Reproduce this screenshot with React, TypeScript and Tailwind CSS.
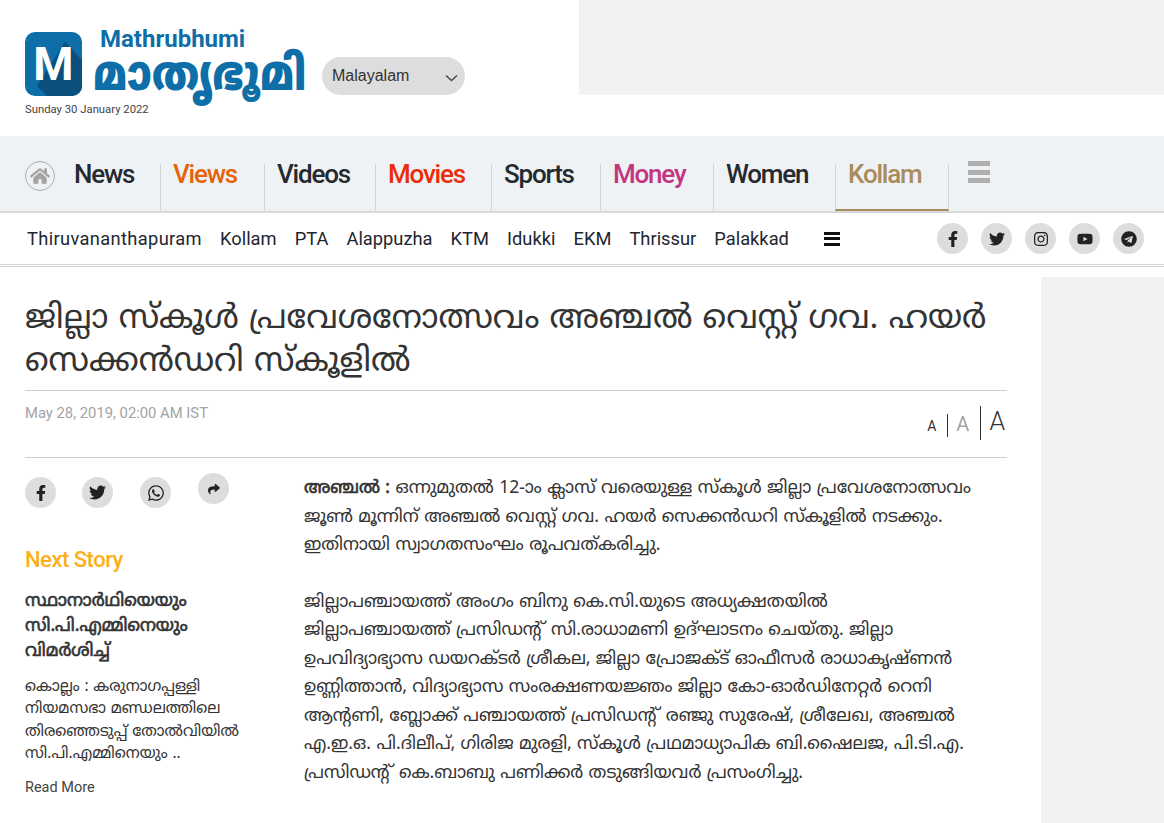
import React from "react";
import { FaFacebookF, FaTwitter, FaInstagram, FaYoutube, FaTelegram, FaWhatsapp, FaShare, FaHome } from "react-icons/fa";

const latin = { fontFamily: '"Roboto", "Noto Sans", "Noto Sans Malayalam", sans-serif' };
const mal = { fontFamily: '"Noto Sans Malayalam", "Noto Sans", "Open Sans", sans-serif' };

const nav = [
  ["News", "text-[#252a30]", "w-[160px]", "pl-[74px]", false],
  ["Views", "text-[#e5630b]", "w-[104px]", "pl-[12px]", true],
  ["Videos", "text-[#252a30]", "w-[111px]", "pl-[12px]", true],
  ["Movies", "text-[#ea2e0c]", "w-[116px]", "pl-[12px]", true],
  ["Sports", "text-[#252a30]", "w-[109px]", "pl-[12px]", true],
  ["Money", "text-[#c4357f]", "w-[113px]", "pl-[12px]", true],
  ["Women", "text-[#252a30]", "w-[122px]", "pl-[12px]", true],
];
const sub = ["Kollam", "PTA", "Alappuzha", "KTM", "Idukki", "EKM", "Thrissur", "Palakkad"];
const socials = [FaFacebookF, FaTwitter, FaInstagram, FaYoutube, FaTelegram];

function Circle({ children, className = "" }: { children: React.ReactNode; className?: string }) {
  return (
    <span className={`flex h-[31px] w-[31px] shrink-0 items-center justify-center rounded-full bg-[#dddddd] text-[#222] ${className}`}>
      {children}
    </span>
  );
}

export default function App() {
  return (
    <div className="h-[823px] w-[1164px] overflow-hidden bg-white text-[#333]" style={latin}>
      <header className="flex h-[136px]">
        <div className="w-[579px] shrink-0 pl-[25px] pt-[27px]">
          <div className="flex h-[68px]">
            <div className="relative mt-[5px] flex h-[64px] w-[57px] shrink-0 items-center justify-center overflow-hidden rounded-[10px] bg-[#0d6ea8]">
              <svg className="absolute inset-0" viewBox="0 0 57 64" width="57" height="64">
                <path d="M40 10 L57 28 V64 H22 L12 54 Z" fill="#0b4f7d" />
              </svg>
              <span className="relative text-[46px] font-bold leading-none text-white">M</span>
            </div>
            <div className="ml-[11px] w-[222px]">
              <div className="ml-[7px] mt-[2px] h-[20px] text-[24px] font-bold leading-[20px] text-[#0d6ea8]">Mathrubhumi</div>
              <div className="mt-[2px] origin-top scale-y-[1.22] whitespace-nowrap text-[40px] font-black leading-[44px] text-[#0d6ea8]" style={mal}>മാതൃഭൂമി</div>
            </div>
            <div className="relative ml-[7px] mt-[30px] flex h-[38px] w-[143px] shrink-0 items-center rounded-full bg-[#dddddd] pl-[10px] text-[16px] text-[#333]" style={{ fontFamily: '"Liberation Sans", sans-serif' }}>
              Malayalam
              <svg className="absolute right-[7px] top-[17px]" width="13" height="8" viewBox="0 0 13 8" fill="none" stroke="#444" strokeWidth="1.4"><path d="M1 1.5 L6.5 6.5 L12 1.5" /></svg>
            </div>
          </div>
          <div className="mt-[8px] text-[11.3px] leading-[14px] text-[#444]">Sunday 30 January 2022</div>
        </div>
        <div className="h-[95px] flex-1 bg-[#f2f2f2]" />
      </header>

      <nav className="relative flex h-[77px] border-b-2 border-[#d9d9d9] bg-[#eff2f5]">
        <span className="absolute left-[25px] top-[25px] flex h-[30px] w-[30px] items-center justify-center rounded-full border border-[#aaa]">
          <FaHome className="text-[20px] text-[#a3a3a3]" />
        </span>
        {nav.map(([label, color, w, pl, sep]) => (
          <div key={label as string} className={`${w} ${pl} mt-[28px] h-[47px] shrink-0 ${sep ? "border-l border-[#d3d3d3]" : ""}`}>
            <span className={`${color} -mt-px block whitespace-nowrap text-[26px] font-medium leading-[22px] tracking-[-1.2px]`}>{label}</span>
          </div>
        ))}
        <div className="mt-[28px] h-[47px] w-[114px] shrink-0 border-x border-b-2 border-[#d3d3d3] border-b-[#a98c5d] pl-[12px]">
          <span className="-mt-px block text-[26px] font-medium leading-[22px] tracking-[-1.2px] text-[#a98c5d]">Kollam</span>
        </div>
        <div className="ml-[19px] mt-[25px] flex h-[22px] w-[22px] flex-col justify-between">
          <span className="h-[5px] bg-[#b0b0b0]" />
          <span className="h-[5px] bg-[#b0b0b0]" />
          <span className="h-[5px] bg-[#b0b0b0]" />
        </div>
      </nav>

      <div className="flex h-[54px] items-center border-b-[3px] border-double border-[#d6d6d6] pl-[27px]">
        <div className="mt-[1px] flex w-[762px] justify-between text-[18.3px] text-[#1d2630]">
          <span className="whitespace-nowrap tracking-[0.35px]">Thiruvananthapuram</span>
          {sub.map((s) => <span key={s} className="whitespace-nowrap">{s}</span>)}
        </div>
        <div className="ml-[35px] flex h-[14px] w-[16px] flex-col justify-between">
          <span className="h-[3px] bg-[#111]" /><span className="h-[3px] bg-[#111]" /><span className="h-[3px] bg-[#111]" />
        </div>
        <div className="ml-auto mr-[20px] flex gap-[13px]">
          {socials.map((I, i) => <Circle key={i}><I className="text-[16px]" /></Circle>)}
        </div>
      </div>

      <div className="mt-[10px] flex">
        <main className="ml-[25px] w-[982px] shrink-0">
          <h1 className="pt-[22px] text-[33px] font-normal leading-[43px] text-[#333]" style={mal}>ജില്ലാ സ്കൂൾ പ്രവേശനോത്സവം അഞ്ചൽ വെസ്റ്റ് ഗവ. ഹയർ സെക്കൻഡറി സ്കൂളിൽ</h1>
          <div className="mt-[5px] flex h-[68px] justify-between border-y border-[#cccccc]">
            <div className="pt-[12px] text-[14.8px] leading-[20px] text-[#a3a3a3]">May 28, 2019, 02:00 AM IST</div>
            <div className="flex items-start pr-[2px] text-[#333]">
              <span className="mt-[26px] text-[14px] leading-[18px]">A</span>
              <span className="ml-[11px] mt-[23px] h-[23px] w-px bg-[#333]" />
              <span className="ml-[8px] mt-[21px] text-[20px] leading-[24px] text-[#a6a6a6]">A</span>
              <span className="ml-[11px] mt-[15px] h-[34px] w-px bg-[#333]" />
              <span className="ml-[8px] mt-[15px] text-[25px] font-light leading-[32px]">A</span>
            </div>
          </div>
          <div className="flex">
            <aside className="w-[279px] shrink-0">
              <div className="flex items-start pt-[15px]">
                <Circle className="mt-[4px]"><FaFacebookF className="text-[16px]" /></Circle>
                <Circle className="ml-[26px] mt-[4px]"><FaTwitter className="text-[17px]" /></Circle>
                <Circle className="ml-[27px] mt-[4px]"><FaWhatsapp className="text-[18px]" /></Circle>
                <Circle className="ml-[27px] h-[30px] w-[30px]"><FaShare className="text-[12px]" /></Circle>
              </div>
              <div className="mt-[37px] text-[22px] font-medium leading-[30px] tracking-[-0.5px] text-[#fbb01a]">Next Story</div>
              <div className="mt-[15px] w-[200px] text-[17.5px] font-normal leading-[25px] text-[#333] [-webkit-text-stroke:0.6px_#333]" style={mal}>സ്ഥാനാർഥിയെയും സി.പി.എമ്മിനെയും വിമർശിച്ച്</div>
              <div className="mt-[12px] w-[230px] text-[15.35px] leading-[22.3px] text-[#333]" style={mal}>കൊല്ലം : കരുനാഗപ്പള്ളി നിയമസഭാ മണ്ഡലത്തിലെ തിരഞ്ഞെടുപ്പ് തോൽവിയിൽ സി.പി.എമ്മിനെയും ..</div>
              <div className="mt-[11px] text-[14.5px] leading-[22px] text-[#444]">Read More</div>
            </aside>
            <article className="w-[672px] pt-[17px] text-[17.55px] leading-[28.5px] text-[#333]" style={mal}>
              <p><span className="[-webkit-text-stroke:0.6px_#333]">അഞ്ചൽ :</span> ഒന്നുമുതൽ 12-ാം ക്ലാസ് വരെയുള്ള സ്കൂൾ ജില്ലാ പ്രവേശനോത്സവം ജൂൺ മൂന്നിന് അഞ്ചൽ വെസ്റ്റ് ഗവ. ഹയർ സെക്കൻഡറി സ്കൂളിൽ നടക്കും. ഇതിനായി സ്വാഗതസംഘം രൂപവത്കരിച്ചു.</p>
              <p className="mt-[28px]">ജില്ലാപഞ്ചായത്ത് അംഗം ബിനു കെ.സി.യുടെ അധ്യക്ഷതയിൽ ജില്ലാപഞ്ചായത്ത് പ്രസിഡന്റ് <span className="ml-[4px]">സി.രാധാമണി</span> ഉദ്ഘാടനം ചെയ്തു. ജില്ലാ ഉപവിദ്യാഭ്യാസ ഡയറക്ടർ ശ്രീകല, ജില്ലാ പ്രോജക്ട് ഓഫീസർ രാധാകൃഷ്ണൻ ഉണ്ണിത്താൻ, വിദ്യാഭ്യാസ സംരക്ഷണയജ്ഞം ജില്ലാ കോ-ഓർഡിനേറ്റർ റെനി ആന്റണി, ബ്ലോക്ക് പഞ്ചായത്ത് പ്രസിഡന്റ് <span className="ml-[4px]">രഞ്ജു</span> സുരേഷ്, ശ്രീലേഖ, അഞ്ചൽ എ.ഇ.ഒ. പി.ദിലീപ്, ഗിരിജ മുരളി, സ്കൂൾ പ്രഥമാധ്യാപിക ബി.ഷൈലജ, പി.ടി.എ. പ്രസിഡന്റ് <span className="ml-[4px]">കെ.ബാബു</span> പണിക്കർ തടുങ്ങിയവർ പ്രസംഗിച്ചു.</p>
            </article>
          </div>
        </main>
        <div className="ml-[34px] h-[600px] flex-1 bg-[#f2f2f2]" />
      </div>
    </div>
  );
}
